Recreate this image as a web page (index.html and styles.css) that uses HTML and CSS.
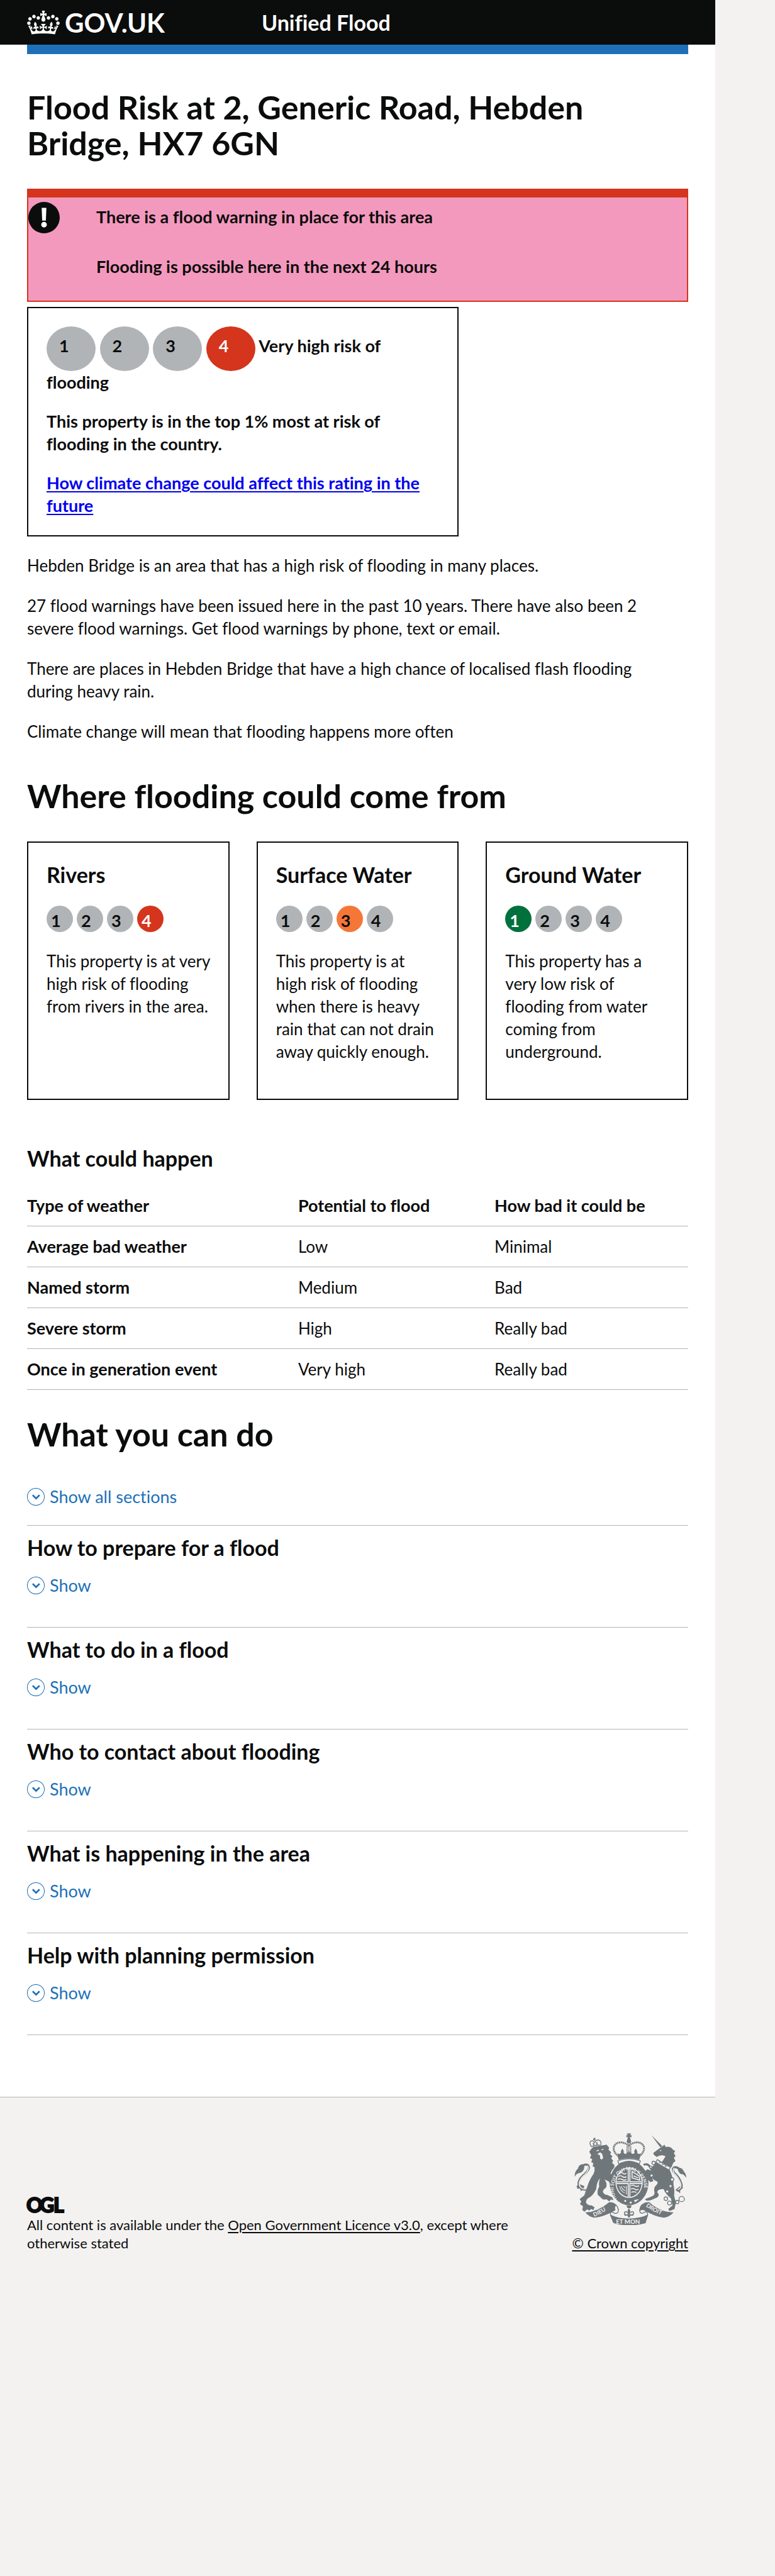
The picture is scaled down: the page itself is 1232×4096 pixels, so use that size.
FILE: index.html
```html
<!DOCTYPE html>
<html lang="en">
<head>
<meta charset="utf-8">
<meta name="viewport" content="width=device-width, initial-scale=1">
<title>Flood Risk - Unified Flood - GOV.UK</title>
<link rel="stylesheet" href="styles.css">
</head>
<body>
<svg class="sprite" aria-hidden="true" width="0" height="0">
  <symbol id="chevron" viewBox="0 0 36 36">
    <circle cx="18" cy="18" r="17.4" fill="none" stroke="currentColor" stroke-width="1.3"/>
    <path d="M11.5 14.5 L18.5 21.5 L25.5 14.5" fill="none" stroke="currentColor" stroke-width="3.4"/>
  </symbol>
</svg>
<div class="page">
  <header class="header">
    <div class="header-inner">
      <a class="logo" href="#">
        <svg class="logo-crown" viewBox="0 0 132 97" aria-hidden="true"><path fill="currentColor" d="M25 30.2c3.5 1.5 7.7-.2 9.1-3.7 1.5-3.6-.2-7.8-3.9-9.2-3.6-1.4-7.6.3-9.1 3.9-1.4 3.5.3 7.5 3.9 9zM9 39.5c3.6 1.5 7.8-.2 9.2-3.7 1.5-3.6-.2-7.8-3.9-9.1-3.6-1.5-7.6.2-9.1 3.8-1.4 3.5.3 7.5 3.8 9zM4.4 57.2c3.5 1.5 7.7-.2 9.1-3.8 1.5-3.6-.2-7.7-3.9-9.1-3.5-1.5-7.6.3-9.1 3.8-1.4 3.5.3 7.6 3.9 9.1zm38.3-21.4c3.5 1.5 7.7-.2 9.1-3.8 1.5-3.6-.2-7.7-3.9-9.1-3.6-1.5-7.6.3-9.1 3.8-1.3 3.6.4 7.7 3.9 9.1zm64.4-5.6c-3.6 1.5-7.8-.2-9.1-3.7-1.5-3.6.2-7.8 3.8-9.2 3.6-1.4 7.7.3 9.2 3.9 1.3 3.5-.4 7.5-3.9 9zm15.9 9.3c-3.6 1.5-7.7-.2-9.1-3.7-1.5-3.6.2-7.8 3.7-9.1 3.6-1.5 7.7.2 9.2 3.8 1.5 3.5-.3 7.5-3.8 9zm4.7 17.7c-3.6 1.5-7.8-.2-9.2-3.8-1.5-3.6.2-7.7 3.9-9.1 3.6-1.5 7.7.3 9.2 3.8 1.3 3.5-.4 7.6-3.9 9.1zM89.3 35.8c-3.6 1.5-7.8-.2-9.2-3.8-1.4-3.6.2-7.7 3.9-9.1 3.6-1.5 7.7.3 9.2 3.8 1.4 3.6-.3 7.7-3.9 9.1zM69.7 17.7l8.9 4.7V9.3l-8.9 2.8c-.2-.3-.5-.6-.9-.9L72.4 0H59.6l3.5 11.2c-.3.3-.6.5-.9.9l-8.8-2.8v13.1l8.8-4.7c.3.3.6.7.9.9l-5 15.4v.1c-.2.8-.4 1.6-.4 2.4 0 4.1 3.1 7.5 7 8.1h.2c.3 0 .7.1 1 .1.4 0 .7 0 1-.1h.2c4-.6 7.1-4.1 7.1-8.1 0-.8-.1-1.7-.4-2.4V34l-5.1-15.4c.4-.2.7-.6 1-.9zM66 92.8c16.9 0 32.8 1.1 47.1 3.2 4-16.9 8.9-26.7 14-33.5l-9.6-3.4c1 4.9 1.1 7.2 0 10.2-1.5-1.4-3-4.3-4.2-8.7L108.6 76c2.8-2 5-3.2 7.5-3.3-4.4 9.4-10 11.9-13.6 11.2-4.3-.8-6.3-4.6-5.6-7.9 1-4.7 5.7-5.9 8-.5 4.3-8.7-3-11.4-7.6-8.8 7.1-7.2 7.9-13.5 2.1-21.1-8 6.1-8.1 12.3-4.5 20.8-4.7-5.4-12.1-2.5-9.5 6.2 3.4-5.2 7.9-2 7.2 3.1-.6 4.3-6.4 7.8-13.5 7.2-10.3-.9-10.9-8-11.2-13.8 2.5-.5 7.1 1.8 11 7.3L80.2 60c-4.1 4.4-8 5.3-12.3 5.4 1.4-4.4 8-11.6 8-11.6H55.5s6.4 7.2 7.9 11.6c-4.2-.1-8-1-12.3-5.4l1.4 16.4c3.9-5.5 8.5-7.7 10.9-7.3-.3 5.8-.9 12.8-11.1 13.8-7.2.6-12.9-2.9-13.5-7.2-.7-5 3.8-8.3 7.1-3.1 2.7-8.7-4.6-11.6-9.4-6.2 3.7-8.5 3.6-14.7-4.6-20.8-5.8 7.6-5 13.9 2.2 21.1-4.7-2.6-11.9.1-7.7 8.8 2.3-5.5 7.1-4.2 8.1.5.7 3.3-1.3 7.1-5.7 7.9-3.5.7-9-1.8-13.5-11.2 2.5.1 4.7 1.3 7.5 3.3l-4.7-15.4c-1.2 4.4-2.7 7.2-4.3 8.7-1.1-3-.9-5.3 0-10.2l-9.5 3.4c5 6.9 9.9 16.7 14 33.5 14.8-2.1 30.8-3.2 47.7-3.2z"/></svg>
        <span class="logo-text">GOV.UK</span>
      </a>
      <a class="service" href="#">Unified Flood</a>
    </div>
  </header>

  <main class="main">
    <h1 class="heading-l title">Flood Risk at 2, Generic Road, Hebden Bridge, HX7 6GN</h1>

    <section class="alert">
      <svg class="alert-icon" viewBox="0 0 63 63" aria-hidden="true"><circle cx="31.5" cy="31.5" r="31.5" fill="#0b0c0c"/><path d="M26.8 12h9.4l-1 25.5h-7.4z" fill="#fff"/><circle cx="31.5" cy="45.6" r="5.6" fill="#fff"/></svg>
      <div class="alert-text">
        <p>There is a flood warning in place for this area</p>
        <p>Flooding is possible here in the next 24 hours</p>
      </div>
    </section>

    <div class="thirds">
      <section class="box rating">
        <p><span class="score score-big">1</span> <span class="score score-big">2</span> <span class="score score-big">3</span> <span class="score score-big very-high">4</span> Very high risk of flooding</p>
        <p>This property is in the top 1% most at risk of flooding&nbsp;in the country.</p>
        <p><a href="#">How climate change could affect this rating in the future</a></p>
      </section>
    </div>

    <section class="intro">
      <p>Hebden Bridge is an area that has a high risk of flooding in many places.</p>
      <p>27 flood warnings have been issued here in the past 10 years. There have also been 2 severe flood warnings. Get flood warnings by phone, text or email.</p>
      <p>There are places in Hebden Bridge that have a high chance of localised flash flooding during heavy rain.</p>
      <p>Climate change will mean that flooding happens more often</p>
    </section>

    <h2 class="heading-l sources-title">Where flooding could come from</h2>
    <div class="thirds">
      <section class="box source">
        <h3 class="heading-m">Rivers</h3>
        <div class="scores"><span class="score">1</span><span class="score">2</span><span class="score">3</span><span class="score very-high">4</span></div>
        <p>This property is at very high risk of flooding from rivers in the area.</p>
      </section>
      <section class="box source">
        <h3 class="heading-m">Surface Water</h3>
        <div class="scores"><span class="score">1</span><span class="score">2</span><span class="score high">3</span><span class="score">4</span></div>
        <p>This property is at high&nbsp;risk of flooding when&nbsp;there is heavy rain&nbsp;that can not drain away quickly enough.</p>
      </section>
      <section class="box source">
        <h3 class="heading-m">Ground Water</h3>
        <div class="scores"><span class="score very-low">1</span><span class="score">2</span><span class="score">3</span><span class="score">4</span></div>
        <p>This property has a very low risk of flooding from water coming from underground.</p>
      </section>
    </div>

    <table class="table">
      <caption class="heading-m">What could happen</caption>
      <thead>
        <tr><th class="col-type" scope="col">Type of weather</th><th class="col-potential" scope="col">Potential to flood</th><th scope="col">How bad it could be</th></tr>
      </thead>
      <tbody>
        <tr><th scope="row">Average bad weather</th><td>Low</td><td>Minimal</td></tr>
        <tr><th scope="row">Named storm</th><td>Medium</td><td>Bad</td></tr>
        <tr><th scope="row">Severe storm</th><td>High</td><td>Really bad</td></tr>
        <tr><th scope="row">Once in generation event</th><td>Very high</td><td>Really bad</td></tr>
      </tbody>
    </table>

    <h2 class="heading-l actions-title">What you can do</h2>
    <div class="accordion">
      <button class="toggle toggle-all" type="button"><svg aria-hidden="true"><use href="#chevron"/></svg>Show all sections</button>
      <section class="item">
        <h3 class="heading-m">How to prepare for a flood</h3>
        <button class="toggle" type="button"><svg aria-hidden="true"><use href="#chevron"/></svg>Show</button>
      </section>
      <section class="item">
        <h3 class="heading-m">What to do in a flood</h3>
        <button class="toggle" type="button"><svg aria-hidden="true"><use href="#chevron"/></svg>Show</button>
      </section>
      <section class="item">
        <h3 class="heading-m">Who to contact about flooding</h3>
        <button class="toggle" type="button"><svg aria-hidden="true"><use href="#chevron"/></svg>Show</button>
      </section>
      <section class="item">
        <h3 class="heading-m">What is happening in the area</h3>
        <button class="toggle" type="button"><svg aria-hidden="true"><use href="#chevron"/></svg>Show</button>
      </section>
      <section class="item">
        <h3 class="heading-m">Help with planning permission</h3>
        <button class="toggle" type="button"><svg aria-hidden="true"><use href="#chevron"/></svg>Show</button>
      </section>
    </div>
  </main>

  <footer class="footer">
    <div class="licence">
      <svg class="ogl" viewBox="0 0 59 24" aria-hidden="true"><text x="-1 20 42" y="23">OGL</text></svg>
      <p>All content is available under the <a href="#">Open Government Licence v3.0</a>, except where otherwise stated</p>
    </div>
    <a class="copyright" href="#">
      <svg class="arms" viewBox="90 84 675 552" aria-hidden="true">
        <defs>
          <path id="garter" d="M350 484 A92 107 0 1 1 496 472"/>
          <path id="dieu" d="M210 586 Q262 566 318 524"/>
          <path id="droit" d="M520 524 Q576 564 632 582"/>
        </defs>
        <g fill="#6f777b" stroke="none">
          <!-- lion -->
          <path d="M190 180 L205 165 L285 152 L300 170 L296 183 L312 198 L306 210 L320 222 L312 235 L324 248 L318 262 L332 275 L330 292 L318 305 L308 325 L325 350 L322 365 L335 380 L325 404 L308 388 L295 372 L272 362 Q290 385 282 410 Q265 420 262 435 Q268 455 290 456 L320 470 L326 488 L312 482 L300 494 L286 482 L262 482 L232 455 Q225 430 240 405 Q235 385 245 355 Q225 375 222 420 Q205 455 185 468 Q160 478 160 500 Q170 520 195 518 L212 530 L205 546 L190 540 L180 550 L168 542 L150 556 L138 545 L142 524 L124 510 L132 495 L122 480 L150 458 Q160 430 175 385 Q190 350 205 330 Q215 310 212 288 L200 282 L205 264 L192 258 L198 240 L184 232 L192 215 L180 195Z"/>
          <path d="M150 272 Q122 262 110 298 Q92 312 92 346 Q104 322 126 322 Q154 312 150 272Z"/>
          <path d="M104 402 L118 388 L150 402 L146 422 L128 432 L126 416 L108 418Z"/>
          <!-- unicorn -->
          <path d="M554 95 L620 160 L608 168Z"/>
          <path d="M606 172 L634 152 L640 166 Q672 160 684 182 L698 190 L690 204 L700 220 L690 232 L700 250 L686 262 L676 288 Q648 284 618 258 L640 222 L622 216 Q600 216 588 226 L570 214 L566 202Z"/>
          <path d="M584 258 Q620 288 664 302 Q690 360 688 392 Q696 428 692 462 L702 500 L694 540 L664 552 L656 540 L682 518 L672 476 Q640 450 628 420 Q590 420 590 440 Q608 456 590 470 L548 488 L524 490 L516 480 L552 466 Q580 456 572 434 Q568 410 584 396 Q600 380 586 372 Q566 368 560 350 L566 372 L548 378 L520 350 L508 318 L530 300 L560 310 L560 286Z"/>
          <path d="M700 424 L728 402 L746 412 L728 426 L728 446 L716 434Z"/>
          <path d="M712 292 Q740 286 752 316 Q766 330 764 352 Q750 328 734 330 Q716 322 712 292Z"/>
        </g>
        <!-- tails, lit paw and unicorn foreleg -->
        <g fill="none" stroke-linecap="round">
          <path d="M156 424 Q112 418 116 378 Q124 350 154 328 Q188 294 172 276 Q160 266 142 278" stroke="#6f777b" stroke-width="13"/>
          <path d="M156 420 Q116 416 120 380 Q128 352 156 330 Q184 296 170 280" stroke="#f3f2f1" stroke-width="6"/>
          <path d="M712 428 Q742 420 736 390 Q724 350 696 326 Q676 304 690 290 Q704 284 720 296" stroke="#6f777b" stroke-width="13"/>
          <path d="M716 422 Q736 414 732 390 Q720 352 692 326 Q680 308 690 294" stroke="#f3f2f1" stroke-width="6"/>
          <path d="M512 272 Q536 264 546 288 L560 306" stroke="#6f777b" stroke-width="12"/>
        </g>
        <!-- chain -->
        <g fill="#f3f2f1" stroke="#6f777b" stroke-width="5">
          <circle cx="568" cy="262" r="10"/><circle cx="551" cy="288" r="7"/><circle cx="556" cy="338" r="9"/><circle cx="680" cy="362" r="10"/><circle cx="670" cy="402" r="9"/><circle cx="650" cy="434" r="9"/><circle cx="642" cy="478" r="11"/><circle cx="664" cy="504" r="12"/><circle cx="710" cy="498" r="10"/><circle cx="737" cy="480" r="16"/>
          <path d="M590 242 L670 290 L660 304 L582 258Z"/>
          <path d="M600 250 L606 262 L618 258 L622 272 L634 268 L640 284 L652 278" fill="none" stroke-width="4"/>
        </g>
        <!-- faces -->
        <g fill="#f3f2f1"><path d="M218 190 L236 182 L238 190Z M250 184 L266 176 L262 186Z M228 208 L246 198 L258 208 L264 232 L254 242 L246 236 L244 216Z"/><path d="M602 188 L616 184 L610 192Z"/></g>
        <!-- lion's crown -->
        <g fill="none" stroke="#6f777b" stroke-width="5">
          <path d="M192 164 L184 146 Q184 128 200 128 Q208 130 214 140 Q218 122 236 124 Q254 128 250 152 M192 164 Q220 150 252 156"/>
          <path d="M211 111 V128 M203 119 H219 M226 136 V152 M204 140 L208 156" stroke-width="7"/>
        </g>
        <!-- royal crown -->
        <g fill="none" stroke="#6f777b">
          <path d="M356 222 Q322 196 328 166 Q338 138 372 138 Q404 142 418 160 Q434 142 466 138 Q500 138 510 166 Q514 196 482 222" stroke-width="11" stroke-dasharray="8 3"/>
          <path d="M408 160 V208 M430 160 V208" stroke-width="5"/>
          <path d="M419 150 V204" stroke-width="8" stroke-dasharray="8 4"/>
        </g>
        <g fill="#6f777b">
          <path d="M406 84 h26 l-7 12 9 -3 v16 l-10 -4 6 20 a13 13 0 1 1 -22 0 l6 -20 -10 4 v-16 l9 3z"/>
          <path d="M350 204 Q364 214 372 200 Q366 192 380 176 Q392 192 386 200 Q396 214 406 204 Q412 198 419 192 Q426 198 434 204 Q446 214 454 200 Q446 192 460 176 Q474 192 468 200 Q476 214 490 204 L482 244 Q419 224 356 244Z"/>
          <path d="M352 250 Q419 224 488 250 L482 268 Q419 240 358 268Z" fill="#f3f2f1" stroke="#6f777b" stroke-width="5"/>
          <!-- garter and shield -->
          <ellipse cx="420" cy="383" rx="117" ry="134"/>
          <ellipse cx="420" cy="381" rx="82" ry="92" fill="#f3f2f1"/>
          <ellipse cx="420" cy="381" rx="76" ry="86"/>
        </g>
        <g fill="none" stroke="#f3f2f1">
          <path d="M420 296 V467 M345 381 H496" stroke-width="16"/>
          <path d="M362 324 q10 -10 20 0 t22 0 M356 344 q12 -10 24 0 t24 0 M352 362 q12 -8 26 0 t26 0 M432 400 q10 -8 22 0 t26 0 M432 420 q10 -8 22 0 t22 0 M434 440 q10 -8 30 0" stroke-width="6"/>
          <path d="M436 312 L480 340 L484 366 L438 352 V314 M446 340 L474 352" stroke-width="6"/>
          <path d="M364 402 Q366 430 394 444 M374 402 Q376 420 396 430 M386 402 L398 414 M404 400 V452" stroke-width="4"/>
        </g>
        <g fill="none" stroke="#6f777b" stroke-width="4"><path d="M420 296 V467 M345 381 H496"/></g>
        <g fill="#f3f2f1"><circle cx="397" cy="491" r="6"/><circle cx="430" cy="501" r="6"/><path d="M450 486 l30 -6 -24 20z"/></g>
        <!-- motto ribbon -->
        <g fill="#6f777b" stroke="#6f777b" stroke-width="4">
          <path d="M160 562 Q232 560 302 500 Q326 500 342 516 Q328 528 336 546 Q258 590 210 590 Q180 586 160 562Z"/>
          <path d="M684 562 Q604 560 540 500 Q512 500 496 516 Q486 530 484 548 Q500 540 512 546 Q580 586 630 590 Q664 586 684 562Z"/>
          <path d="M342 516 Q362 540 352 562 Q336 572 322 560 Q306 552 308 576 Q352 600 420 600 Q486 600 532 576 Q532 556 518 556 Q500 572 488 562 Q478 548 496 516" fill="none" stroke-width="5"/>
          <path d="M308 578 Q352 602 420 602 Q486 602 532 578 L518 624 Q480 636 420 636 Q360 636 326 622Z"/>
          <path d="M404 518 H436 L430 534 H410Z M419 534 Q434 556 424 572 H446 V580 H426 V590 H413 V580 H392 V572 H414 Q404 556 419 534Z" stroke="none"/>
          <path d="M414 574 Q392 580 392 562 Q400 548 408 562 M425 574 Q448 580 448 562 Q440 548 430 562" fill="none" stroke-width="6"/>
        </g>
        <g class="motto">
          <text font-size="28"><textPath href="#garter" startOffset="6">HONI SOIT QUI MAL Y PENSE</textPath></text>
          <text font-size="34"><textPath href="#dieu">DIEU</textPath></text>
          <text x="341" y="630" font-size="37">ET MON</text>
          <text font-size="34"><textPath href="#droit">DROIT</textPath></text>
        </g>
      </svg>
      <span>© Crown copyright</span>
    </a>
  </footer>
</div>
</body>
</html>
```
FILE: styles.css
```css
* { box-sizing: border-box; }

body {
  margin: 0;
  background: #f3f2f1;
  color: #0b0c0c;
  font-family: Lato, "Liberation Sans", sans-serif;
  font-size: 26px;
  line-height: 36px;
  font-variant-ligatures: none;
}

h1, h2, h3, p { margin: 0; }

.sprite { display: block; }
.page { margin-right: 95px; }

.heading-l { font-size: 52px; line-height: 57px; font-weight: 700; }
.heading-m { font-size: 34px; line-height: 43px; font-weight: 700; }

/* Header */
.header { padding: 0 43px; background: #0b0c0c; color: #fff; }
.header-inner {
  display: grid;
  grid-template-columns: 1fr 2fr;
  column-gap: 34px;
  align-items: center;
  height: 71px;
}
.header a { color: inherit; text-decoration: none; }
.logo { display: flex; align-items: center; gap: 8px; }
.logo-crown { width: 52px; height: 38px; }
.logo-text { font-size: 42px; line-height: 42px; font-weight: 700; }
.service { font-size: 34px; line-height: 43px; font-weight: 700; }

/* Main */
.main { padding: 0 43px 98px; background: #fff; }
.title { margin-bottom: 44px; padding: 56px 0 0; border-top: 15px solid #1d70b8; }
.title::after { content: ""; }

.alert {
  display: flex;
  gap: 58px;
  margin-bottom: 8px;
  border: 2px solid #d4351c;
  border-top-width: 14px;
  background: #f499be;
  font-size: 27px;
  font-weight: 700;
}
.alert-icon { flex: none; width: 50px; height: 50px; margin-top: 7px; }
.alert-text { display: grid; gap: 43px; padding: 13px 0 36px; }

.thirds { display: grid; grid-template-columns: repeat(3, 1fr); gap: 43px; }
.box { padding: 29px; border: 2px solid #0b0c0c; }
.rating {
  display: grid;
  grid-column: span 2;
  gap: 26px;
  margin-bottom: 28px;
  font-size: 27px;
  font-weight: 700;
}
.rating a { color: #0000ee; text-decoration-thickness: 2px; text-underline-offset: 3px; }

.score {
  width: 42px;
  height: 42px;
  padding: 6px 0 0 7px;
  border-radius: 50%;
  background: #b1b4b6;
  font-size: 27px;
  font-weight: 700;
}
.score-big { display: inline-block; width: 78px; height: 71px; padding: 13px 0 0 20px; }
.very-high { background: #d4351c; color: #fff; }
.high { background: #f47738; }
.very-low { background: #00703c; color: #fff; }

.intro { display: grid; gap: 28px; padding-right: 40px; }
.sources-title { margin: 56px 0 44px; }
.source { padding-right: 20px; }
.source p { margin-bottom: 28px; }
.scores { display: flex; gap: 6px; margin: 28px 0; }

.table { width: 100%; margin-top: 71px; border-collapse: collapse; text-align: left; }
.table caption { padding-bottom: 22px; text-align: left; }
.table th, .table td { padding: 14px 20px 14px 0; border-bottom: 1px solid #b1b4b6; }
.table th { font-size: 27px; }
.col-type { width: 41%; }
.col-potential { width: 29.7%; }

.actions-title { margin: 42px 0 53px; }
.accordion { border-bottom: 1px solid #b1b4b6; }
.toggle {
  display: flex;
  align-items: center;
  gap: 8px;
  padding: 0;
  border: 0;
  background: none;
  color: #1d70b8;
  font: inherit;
  font-size: 27px;
  cursor: pointer;
}
.toggle svg { width: 28px; height: 28px; }
.toggle-all { margin-bottom: 27px; }
.item { padding: 13px 0 48px; border-top: 1px solid #b1b4b6; }
.item h3 { margin-bottom: 21px; }

/* Footer */
.footer {
  display: flex;
  justify-content: space-between;
  align-items: flex-end;
  gap: 43px;
  padding: 57px 43px;
  border-top: 1px solid #b1b4b6;
  font-size: 22px;
  line-height: 29px;
}
.footer a { color: inherit; text-decoration-thickness: 2px; text-underline-offset: 3px; }
.ogl { display: block; width: 59px; height: 24px; margin-bottom: 4px; overflow: visible; }
.ogl text { fill: #0b0c0c; stroke: #0b0c0c; stroke-width: 2px; font-size: 32px; font-weight: 900; }
.copyright { display: flex; flex: none; flex-direction: column; align-items: center; gap: 14px; }
.arms { width: 178px; height: 146px; }
.motto { fill: #f3f2f1; font-weight: 700; }
```
